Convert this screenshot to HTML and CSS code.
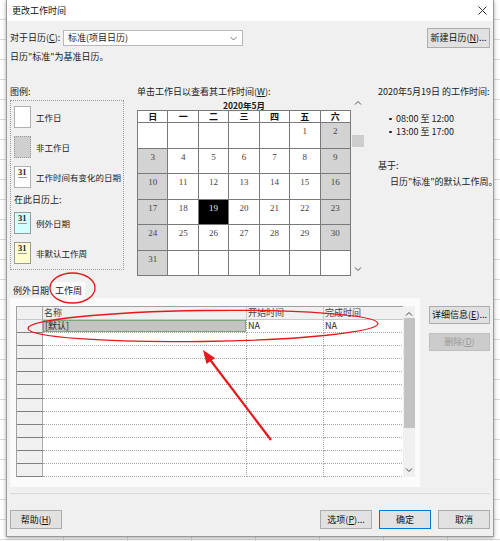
FILE: index.html
```html
<!DOCTYPE html>
<html>
<head>
<meta charset="utf-8">
<link rel="stylesheet" href="styles.css">
</head>
<body>
<div class="screen">
  <div class="dialog">
    <div class="titlebar">
      <span class="title">更改工作时间</span>
      <svg class="close" width="9" height="9" viewBox="0 0 9 9"><path d="M0.5 0.5L8.5 8.5M8.5 0.5L0.5 8.5" stroke="#333" stroke-width="1"/></svg>
    </div>
    <div class="content">
      <div class="toprow">
        <span class="lbl">对于日历(<u>C</u>):</span>
        <div class="select">
          <span>标准(项目日历)</span>
          <svg width="7" height="5" viewBox="0 0 7 5"><path d="M0.5 1L3.5 4L6.5 1" fill="none" stroke="#777" stroke-width="1"/></svg>
        </div>
        <div class="grow"></div>
        <div class="btn newcal">新建日历(<u>N</u>)...</div>
      </div>
      <div class="basecal">日历"标准"为基准日历。</div>

      <div class="main">
        <div class="legend">
          <div class="cap">图例:</div>
          <div class="legbox">
            <div class="legitem"><div class="sw sw-white"></div><span>工作日</span></div>
            <div class="legitem"><div class="sw sw-gray"></div><span>非工作日</span></div>
            <div class="legitem"><div class="sw sw-white"><span class="n31">31</span></div><span>工作时间有变化的日期</span></div>
            <div class="legsub">在此日历上:</div>
            <div class="legitem"><div class="sw sw-cyan"><span class="n31">31</span></div><span>例外日期</span></div>
            <div class="legitem"><div class="sw sw-yellow"><span class="n31">31</span></div><span>非默认工作周</span></div>
          </div>
        </div>

        <div class="calcol">
          <div class="cap">单击工作日以查看其工作时间(<u>W</u>):</div>
          <div class="calwrap">
            <div class="calmain">
              <div class="month">2020年5月</div>
              <div class="cal">
                <div class="dh">日</div><div class="dh">一</div><div class="dh">二</div><div class="dh">三</div><div class="dh">四</div><div class="dh">五</div><div class="dh">六</div>
                <div class="d"></div><div class="d"></div><div class="d"></div><div class="d"></div><div class="d"></div><div class="d">1</div><div class="d off">2</div>
                <div class="d off">3</div><div class="d">4</div><div class="d">5</div><div class="d">6</div><div class="d">7</div><div class="d">8</div><div class="d off">9</div>
                <div class="d off">10</div><div class="d">11</div><div class="d">12</div><div class="d">13</div><div class="d">14</div><div class="d">15</div><div class="d off">16</div>
                <div class="d off">17</div><div class="d">18</div><div class="d sel">19</div><div class="d">20</div><div class="d">21</div><div class="d">22</div><div class="d off">23</div>
                <div class="d off">24</div><div class="d">25</div><div class="d">26</div><div class="d">27</div><div class="d">28</div><div class="d">29</div><div class="d off">30</div>
                <div class="d off">31</div><div class="d"></div><div class="d"></div><div class="d"></div><div class="d"></div><div class="d"></div><div class="d"></div>
              </div>
            </div>
            <div class="calscroll">
              <svg width="8" height="5" viewBox="0 0 8 5"><path d="M1 4.5L4 1.5L7 4.5" fill="none" stroke="#555" stroke-width="1"/></svg>
              <div class="calthumb"></div>
              <div class="grow"></div>
              <svg width="8" height="5" viewBox="0 0 8 5"><path d="M1 0.5L4 3.5L7 0.5" fill="none" stroke="#555" stroke-width="1"/></svg>
            </div>
          </div>
        </div>

        <div class="info">
          <div class="cap">2020年5月19日 的工作时间:</div>
          <ul class="times">
            <li>08:00 至 12:00</li>
            <li>13:00 至 17:00</li>
          </ul>
          <div class="based">基于:</div>
          <div class="basedtxt">日历"标准"的默认工作周。</div>
        </div>
      </div>

      <div class="tabs">
        <div class="tab">例外日期</div>
        <div class="tab active">工作周</div>
      </div>
      <div class="lower">
        <div class="panel">
          <div class="table">
            <div class="grid">
              <div class="rh hd"></div><div class="c hd">名称</div><div class="c hd">开始时间</div><div class="c hd">完成时间</div>
              <div class="rh"></div><div class="c"><div class="selcell">[默认]</div></div><div class="c">NA</div><div class="c">NA</div>
              <div class="rh"></div><div class="c"></div><div class="c"></div><div class="c"></div>
              <div class="rh"></div><div class="c"></div><div class="c"></div><div class="c"></div>
              <div class="rh"></div><div class="c"></div><div class="c"></div><div class="c"></div>
              <div class="rh"></div><div class="c"></div><div class="c"></div><div class="c"></div>
              <div class="rh"></div><div class="c"></div><div class="c"></div><div class="c"></div>
              <div class="rh"></div><div class="c"></div><div class="c"></div><div class="c"></div>
              <div class="rh"></div><div class="c"></div><div class="c"></div><div class="c"></div>
              <div class="rh"></div><div class="c"></div><div class="c"></div><div class="c"></div>
              <div class="rh"></div><div class="c"></div><div class="c"></div><div class="c"></div>
              <div class="rh"></div><div class="c"></div><div class="c"></div><div class="c"></div>
              <div class="rh"></div><div class="c"></div><div class="c"></div><div class="c"></div>
            </div>
            <div class="tscroll">
              <svg width="8" height="5" viewBox="0 0 8 5"><path d="M1 4.5L4 1.5L7 4.5" fill="none" stroke="#444" stroke-width="1"/></svg>
              <div class="tthumb"></div>
              <div class="grow"></div>
              <svg width="8" height="5" viewBox="0 0 8 5"><path d="M1 0.5L4 3.5L7 0.5" fill="none" stroke="#444" stroke-width="1"/></svg>
            </div>
          </div>
        </div>
        <div class="sidebtns">
          <div class="btn side">详细信息(<u>E</u>)...</div>
          <div class="btn side disabled">删除(<u>D</u>)</div>
        </div>
      </div>
      <div class="sep"></div>
      <div class="bottom">
        <div class="btn bb">帮助(<u>H</u>)</div>
        <div class="grow"></div>
        <div class="btn bb">选项(<u>P</u>)...</div>
        <div class="btn bb ok">确定</div>
        <div class="btn bb">取消</div>
      </div>
    </div>
  </div>
  <svg class="annot" width="500" height="541" viewBox="0 0 500 541">
    <ellipse cx="72.5" cy="288" rx="22.5" ry="15" fill="none" stroke="#e3191c" stroke-width="1.3"/>
    <ellipse cx="203" cy="326" rx="175" ry="15.5" fill="none" stroke="#e3191c" stroke-width="1.3" transform="rotate(-0.8 203 326)"/>
    <line x1="271" y1="440" x2="208" y2="357" stroke="#e3191c" stroke-width="2.2"/>
    <polygon points="203,350 206.5,364 215,358" fill="#e3191c"/>
  </svg>
</div>
</body>
</html>
```

FILE: styles.css
```css
* { box-sizing: border-box; }
html, body { margin: 0; padding: 0; }
body {
  width: 500px;
  height: 541px;
  overflow: hidden;
  font-family: "Noto Sans CJK SC", "Noto Sans", sans-serif;
  font-size: 9px;
  color: #1a1a1a;
  background-color: #ffffff;
  background-image:
    repeating-linear-gradient(to bottom, transparent 0 19px, #d9d9d9 19px 20px),
    repeating-linear-gradient(to right, transparent 0 63px, #d9d9d9 63px 64px);
}
u { text-decoration: underline; text-underline-offset: 1px; }
.screen {
  position: relative;
  width: 500px;
  height: 541px;
  padding-left: 6px;
}
.dialog {
  width: 488px;
  height: 537px;
  background: #f0f0f0;
  border: 1px solid #9a9a9a;
  border-top: none;
  box-shadow: 0 1px 4px rgba(0,0,0,0.35);
  display: flex;
  flex-direction: column;
}
.titlebar {
  height: 21px;
  background: #ffffff;
  display: flex;
  align-items: center;
  justify-content: space-between;
  padding: 0 6px 0 5px;
  flex: none;
}
.title { font-size: 9px; line-height: 12px; color: #111; }
.content {
  padding: 0 3px;
  display: flex;
  flex-direction: column;
  flex: 1;
}
.grow { flex: 1; }
.toprow {
  margin-top: 7px;
  height: 20px;
  display: flex;
  align-items: center;
}
.lbl { width: 53px; line-height: 12px; }
.select {
  width: 180px;
  height: 16px;
  background: #fff;
  border: 1px solid #b8b8b8;
  display: flex;
  align-items: center;
  justify-content: space-between;
  padding: 0 5px 0 4px;
  line-height: 12px;
}
.btn {
  background: #e1e1e1;
  border: 1px solid #adadad;
  display: flex;
  align-items: center;
  justify-content: center;
  line-height: 12px;
  color: #111;
}
.newcal { width: 63px; height: 20px; }
.basecal { margin-top: 3px; line-height: 12px; height: 12px; }

.main {
  margin-top: 23px;
  height: 196px;
  display: flex;
  flex: none;
}
.cap { line-height: 12px; height: 12px; white-space: nowrap; }
.legend { width: 114px; }
.legbox {
  margin-top: 2px;
  height: 170px;
  border: 1px dotted #9a9a9a;
  padding: 5px 3px 0 3px;
  display: flex;
  flex-direction: column;
}
.legitem {
  display: flex;
  align-items: center;
  gap: 5px;
  height: 22px;
  margin-bottom: 8px;
  line-height: 12px;
  font-size: 8.5px;
  white-space: nowrap;
}
.legsub { line-height: 12px; margin-top: -2px; margin-bottom: 6px; }
.sw {
  width: 17px;
  height: 22px;
  border: 1px solid #b0b0b0;
  position: relative;
  flex: none;
}
.sw-white { background: #ffffff; }
.sw-gray { background: #cfcfcf; border-style: dotted; border-color: #9a9a9a; }
.sw-cyan { background: #d4ffff; border-color: #9a9a9a; }
.sw-yellow { background: #ffffd0; border-color: #9a9a9a; }
.n31 {
  position: absolute;
  left: 3px;
  top: 0px;
  font-family: "Liberation Serif", serif;
  font-weight: bold;
  font-size: 8.5px;
  line-height: 10px;
  color: #222;
  border-bottom: 1px solid #999;
}

.calcol { margin-left: 13px; width: 227px; }
.calwrap { display: flex; margin-top: 2px; }
.calmain { width: 214px; }
.month {
  height: 10px;
  line-height: 10px;
  text-align: center;
  font-weight: bold;
  font-size: 8.5px;
}
.cal {
  display: grid;
  grid-template-columns: repeat(7, 1fr);
  grid-template-rows: 11px repeat(6, 24.5px);
  gap: 1px;
  padding: 1px;
  background: #7a7a7a;
  width: 214px;
}
.dh {
  background: #fff;
  text-align: center;
  font-weight: bold;
  font-size: 9px;
  line-height: 11px;
  color: #111;
}
.d {
  background: #fff;
  text-align: center;
  font-family: "Liberation Serif", serif;
  font-size: 9px;
  line-height: 10px;
  padding-top: 3px;
  color: #444;
}
.d.off { background: #d3d3d3; }
.d.sel { background: #000; color: #eee; }
.calscroll {
  width: 13px;
  margin-left: 1px;
  margin-top: -4px;
  height: 182px;
  display: flex;
  flex-direction: column;
  align-items: center;
  padding: 4px 0 6px;
}
.calthumb {
  width: 12px;
  height: 12px;
  background: #cdcdcd;
  margin-top: 30px;
}

.info { margin-left: 14px; width: 112px; }
.times {
  margin: 14px 0 0 0;
  padding: 0 0 0 11px;
  list-style: none;
}
.times li { line-height: 13px; position: relative; padding-left: 7px; }
.times li::before {
  content: "";
  position: absolute;
  left: 0;
  top: 5.5px;
  width: 2.5px;
  height: 2.5px;
  border-radius: 50%;
  background: #222;
}
.based { margin-top: 22px; line-height: 12px; }
.basedtxt { margin-top: 4px; padding-left: 12px; line-height: 12px; white-space: nowrap; }

.tabs {
  height: 16px;
  display: flex;
  align-items: flex-end;
  flex: none;
}
.tab {
  height: 15px;
  line-height: 12px;
  padding: 2px 3px 0;
  color: #222;
  white-space: nowrap;
}
.tab.active {
  background: #fbfbfb;
  height: 16px;
  padding: 3px 3px 0;
}
.lower {
  height: 189px;
  display: flex;
  flex: none;
}
.panel {
  width: 410px;
  height: 189px;
  background: #fbfbfb;
  padding: 8px 5px 0 6px;
}
.table {
  display: flex;
  width: 399px;
  height: 171px;
}
.grid {
  display: grid;
  grid-template-columns: 26px 204px 77px 80px;
  grid-template-rows: 13px repeat(12, 13.1px);
  width: 387px;
  border-left: 1px solid #a0a0a0;
  border-top: 1px solid #a0a0a0;
  background: #fff;
}
.rh {
  background: #f0f0f0;
  border-bottom: 1px solid #7f7f7f;
  border-right: 1px solid #a8a8a8;
}
.c {
  border-bottom: 1px dotted #a8a8a8;
  border-right: 1px dotted #a8a8a8;
  line-height: 12px;
  padding-left: 1px;
  white-space: nowrap;
  overflow: hidden;
  color: #222;
}
.hd { background: #f0f0f0; color: #444; border-bottom: 1px solid #c8c8c8; }
.rh.hd { border-bottom: 1px solid #c8c8c8; }
.c.hd { border-right: 1px solid #c8c8c8; }
.selcell {
  margin-left: -1px;
  height: 12px;
  background: #c3c3c3;
  border: 1px solid #7aa87a;
  line-height: 10px;
  padding-left: 1px;
}
.tscroll {
  width: 12px;
  background: #f0f0f0;
  display: flex;
  flex-direction: column;
  align-items: center;
  padding: 5px 0 4px;
}
.tthumb {
  width: 11px;
  height: 110px;
  margin-top: 2px;
  background: #c2c2c2;
}
.sidebtns {
  margin-left: 9px;
  margin-top: 8px;
  display: flex;
  flex-direction: column;
  gap: 9px;
}
.side { width: 61px; height: 18px; }
.side.disabled { background: #cccccc; border-color: #bfbfbf; color: #9a9a9a; }
.sep {
  margin-top: 6px;
  height: 1px;
  background: #dadada;
  flex: none;
}
.bottom {
  margin-top: 16px;
  display: flex;
  gap: 7px;
}
.bb { width: 52px; height: 19px; }
.ok { border: 1px solid #0078d7; }

.annot {
  position: absolute;
  left: 0;
  top: 0;
  pointer-events: none;
}
```
